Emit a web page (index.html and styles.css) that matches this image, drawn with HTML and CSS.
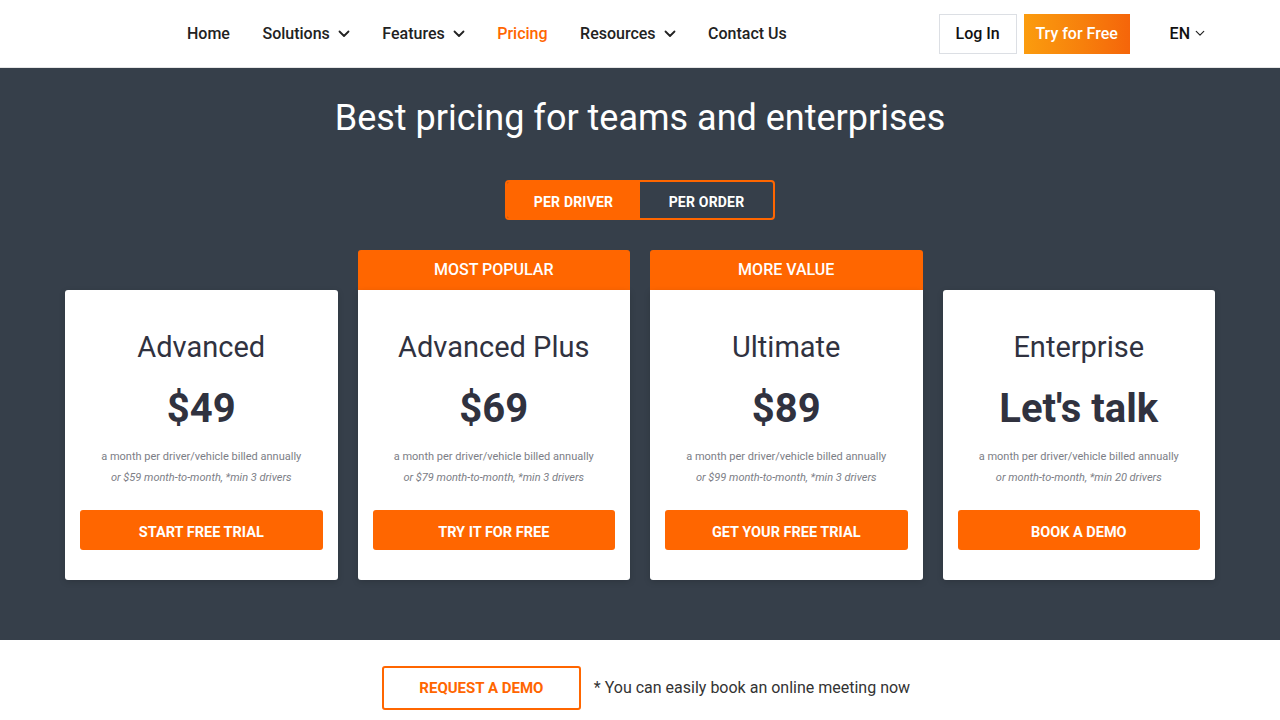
FILE: index.html
```html
<!DOCTYPE html>
<html lang="en">
<head>
<meta charset="utf-8">
<title>Pricing</title>
<link rel="stylesheet" href="styles.css">
</head>
<body>
<header class="topbar">
  <nav class="menu">
    <a class="menu-item" href="#">Home</a>
    <a class="menu-item" href="#">Solutions <svg class="chev" viewBox="0 0 12 8"><path d="M1.5 1.5 6 6l4.5-4.5"/></svg></a>
    <a class="menu-item" href="#">Features <svg class="chev" viewBox="0 0 12 8"><path d="M1.5 1.5 6 6l4.5-4.5"/></svg></a>
    <a class="menu-item active" href="#">Pricing</a>
    <a class="menu-item" href="#">Resources <svg class="chev" viewBox="0 0 12 8"><path d="M1.5 1.5 6 6l4.5-4.5"/></svg></a>
    <a class="menu-item" href="#">Contact Us</a>
  </nav>
  <div class="actions">
    <a class="btn-login" href="#">Log In</a>
    <a class="btn-try" href="#">Try for Free</a>
    <a class="lang" href="#">EN <svg class="chev small" viewBox="0 0 12 8"><path d="M1.5 1.5 6 6l4.5-4.5"/></svg></a>
  </div>
</header>

<section class="pricing">
  <h1 class="headline">Best pricing for teams and enterprises</h1>
  <div class="toggle">
    <button class="toggle-opt on">PER DRIVER</button>
    <button class="toggle-opt">PER ORDER</button>
  </div>

  <div class="plans">
    <div class="plan">
      <div class="badge empty"></div>
      <div class="card">
        <h2 class="plan-name">Advanced</h2>
        <div class="price">$49</div>
        <p class="terms">a month per driver/vehicle billed annually</p>
        <p class="terms alt">or $59 month-to-month, *min 3 drivers</p>
        <a class="cta" href="#">START FREE TRIAL</a>
      </div>
    </div>
    <div class="plan">
      <div class="badge">MOST POPULAR</div>
      <div class="card">
        <h2 class="plan-name">Advanced Plus</h2>
        <div class="price">$69</div>
        <p class="terms">a month per driver/vehicle billed annually</p>
        <p class="terms alt">or $79 month-to-month, *min 3 drivers</p>
        <a class="cta" href="#">TRY IT FOR FREE</a>
      </div>
    </div>
    <div class="plan">
      <div class="badge">MORE VALUE</div>
      <div class="card">
        <h2 class="plan-name">Ultimate</h2>
        <div class="price">$89</div>
        <p class="terms">a month per driver/vehicle billed annually</p>
        <p class="terms alt">or $99 month-to-month, *min 3 drivers</p>
        <a class="cta" href="#">GET YOUR FREE TRIAL</a>
      </div>
    </div>
    <div class="plan">
      <div class="badge empty"></div>
      <div class="card">
        <h2 class="plan-name">Enterprise</h2>
        <div class="price">Let's talk</div>
        <p class="terms">a month per driver/vehicle billed annually</p>
        <p class="terms alt">or month-to-month, *min 20 drivers</p>
        <a class="cta" href="#">BOOK A DEMO</a>
      </div>
    </div>
  </div>
</section>

<section class="demo-row">
  <a class="btn-demo" href="#">REQUEST A DEMO</a>
  <span class="demo-note">* You can easily book an online meeting now</span>
</section>
</body>
</html>
```

FILE: styles.css
```css
* { box-sizing: border-box; }

body {
  margin: 0;
  font-family: Roboto, "Liberation Sans", Arial, sans-serif;
  background: #fff;
  color: #222;
}

a { text-decoration: none; color: inherit; }

/* top navigation */
.topbar {
  height: 68px;
  display: flex;
  align-items: center;
  padding-left: 187px;
  padding-right: 75px;
  border-bottom: 1px solid #e6e6e6;
}

.menu {
  display: flex;
  align-items: center;
  gap: 32.5px;
}

.menu-item {
  font-size: 16px;
  font-weight: 500;
  color: #222;
  display: flex;
  align-items: center;
  gap: 8px;
}

.menu-item.active { color: #ff6600; }

.chev {
  width: 12px;
  height: 8px;
  fill: none;
  stroke: #222;
  stroke-width: 1.8;
  stroke-linecap: round;
  stroke-linejoin: round;
}

.chev.small {
  width: 10px;
  height: 7px;
  stroke-width: 1.4;
}

.actions {
  margin-left: auto;
  display: flex;
  align-items: center;
}

.btn-login {
  height: 40px;
  width: 78px;
  border: 1px solid #dcdfe4;
  display: flex;
  align-items: center;
  justify-content: center;
  font-size: 16px;
  font-weight: 500;
  color: #111;
}

.btn-try {
  margin-left: 7px;
  height: 40px;
  width: 106px;
  display: flex;
  align-items: center;
  justify-content: center;
  font-size: 16px;
  font-weight: 500;
  color: #fff;
  background: linear-gradient(90deg, #fb9c0e 0%, #f7800c 55%, #f5650a 100%);
}

.lang {
  margin-left: 40px;
  display: flex;
  align-items: center;
  gap: 5px;
  font-size: 16px;
  font-weight: 500;
  color: #111;
}

/* pricing band */
.pricing {
  background: #363f4a;
  height: 572px;
  padding-top: 28px;
  display: flex;
  flex-direction: column;
  align-items: center;
}

.headline {
  margin: 0;
  font-size: 36px;
  font-weight: 400;
  color: #fff;
  line-height: 44px;
}

.toggle {
  margin-top: 40px;
  display: flex;
  border: 2px solid #ff6600;
  border-radius: 4px;
  overflow: hidden;
  height: 40px;
}

.toggle-opt {
  border: 0;
  background: transparent;
  color: #fff;
  font-family: inherit;
  font-size: 14px;
  font-weight: 700;
  letter-spacing: 0.2px;
  padding: 3px 0 0;
  width: 133px;
}

.toggle-opt.on {
  background: #ff6600;
  width: 133px;
}

.plans {
  margin-top: 30px;
  display: flex;
  gap: 20px;
}

.plan {
  display: flex;
  flex-direction: column;
  width: 272.5px;
}

.badge {
  height: 40px;
  background: #ff6600;
  color: #fff;
  font-size: 16px;
  font-weight: 500;
  display: flex;
  align-items: center;
  justify-content: center;
  padding-bottom: 1px;
  border-radius: 3px 3px 0 0;
}

.badge.empty { background: transparent; }

.card {
  background: #fff;
  border-radius: 0 0 3px 3px;
  height: 290px;
  padding: 39px 15px 30px;
  display: flex;
  flex-direction: column;
  align-items: center;
  box-shadow: 0 2px 6px rgba(0, 0, 0, 0.15);
}

.plan:first-child .card,
.plan:last-child .card { border-radius: 3px; }

.plan-name {
  margin: 0;
  font-size: 29px;
  font-weight: 400;
  color: #30323f;
  line-height: 36px;
}

.price {
  margin-top: 19px;
  font-size: 40px;
  font-weight: 700;
  color: #30323f;
  line-height: 50px;
}

.terms {
  margin: 16px 0 0;
  font-size: 11px;
  color: #7c7e86;
  line-height: 13px;
}

.terms.alt {
  margin-top: 8px;
  font-style: italic;
}

.cta {
  margin-top: 26px;
  align-self: stretch;
  height: 40px;
  background: #ff6600;
  color: #fff;
  border-radius: 3px;
  font-size: 14.5px;
  font-weight: 700;
  display: flex;
  align-items: center;
  justify-content: center;
  padding-top: 4px;
}

/* bottom demo row */
.demo-row {
  display: flex;
  align-items: center;
  justify-content: center;
  padding-top: 26px;
  padding-left: 12px;
  gap: 13px;
}

.btn-demo {
  width: 199px;
  height: 44px;
  border: 2px solid #ff6600;
  border-radius: 3px;
  color: #ff6600;
  font-size: 15px;
  font-weight: 700;
  display: flex;
  align-items: center;
  justify-content: center;
}

.demo-note {
  font-size: 16px;
  color: #333;
  padding-bottom: 2px;
}
```
